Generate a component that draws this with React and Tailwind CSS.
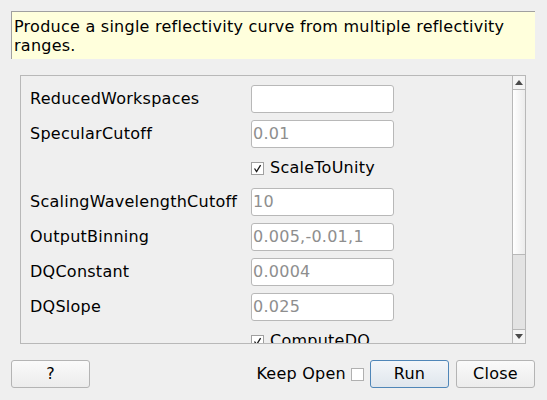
import React from 'react'

const FONT = { fontFamily: '"DejaVu Sans", "Liberation Sans", sans-serif' }

const ROWS = [
  { kind: 'input', label: 'ReducedWorkspaces', value: '' },
  { kind: 'input', label: 'SpecularCutoff', value: '0.01' },
  { kind: 'check', label: 'ScaleToUnity', checked: true },
  { kind: 'input', label: 'ScalingWavelengthCutoff', value: '10' },
  { kind: 'input', label: 'OutputBinning', value: '0.005,-0.01,1' },
  { kind: 'input', label: 'DQConstant', value: '0.0004' },
  { kind: 'input', label: 'DQSlope', value: '0.025' },
  { kind: 'check', label: 'ComputeDQ', checked: true },
]

function CheckBox({ checked }) {
  return (
    <div className="w-[13px] h-[13px] border border-[#a0a0a0] bg-white flex items-center justify-center shrink-0">
      {checked && (
        <svg width="9" height="9" viewBox="0 0 9 9">
          <path d="M1.5 4.5 L3.6 7.5 L7.6 1.2" fill="none" stroke="#1a1a1a" strokeWidth="1.3" />
        </svg>
      )}
    </div>
  )
}

function Row({ row }) {
  if (row.kind === 'check') {
    return (
      <div className="flex items-center h-[26px] mb-[7px]">
        <div className="w-[221px] shrink-0" />
        <CheckBox checked={row.checked} />
        <span className="ml-[6px] text-[16px] text-black whitespace-nowrap">{row.label}</span>
      </div>
    )
  }
  return (
    <div className="flex items-center h-[28px] mb-[7px]">
      <div className="w-[221px] shrink-0 text-[16px] text-black whitespace-nowrap">{row.label}</div>
      <div className="w-[143px] h-[28px] shrink-0 bg-white border border-[#b8b8b8] rounded-[3px] flex items-center pl-[1px] text-[16px] text-[#8e8e8e]">
        {row.value}
      </div>
    </div>
  )
}

function Scrollbar() {
  return (
    <div className="w-[14px] h-full border-x border-[#b8b8b8] flex flex-col shrink-0">
      {/* up arrow */}
      <div className="h-[14px] border-b border-[#b8b8b8] bg-[#f4f4f4] flex items-center justify-center">
        <svg width="8" height="5" viewBox="0 0 8 5">
          <path d="M0 5 L4 0 L8 5 Z" fill="#4a4a4a" />
        </svg>
      </div>
      {/* track */}
      <div className="h-[164px] bg-gradient-to-r from-[#ffffff] to-[#ececec]" />
      {/* handle */}
      <div className="flex-1 bg-[#e3e3e3] border-t border-[#b8b8b8]" />
      {/* down arrow */}
      <div className="h-[14px] border-t border-[#b8b8b8] bg-[#f4f4f4] flex items-center justify-center">
        <svg width="8" height="5" viewBox="0 0 8 5">
          <path d="M0 0 L8 0 L4 5 Z" fill="#4a4a4a" />
        </svg>
      </div>
    </div>
  )
}

function Button({ children, primary }) {
  return (
    <div
      className={`w-[79px] h-[28px] rounded-[3px] border flex items-center justify-center text-[16px] text-black ${
        primary
          ? 'border-[#4f86b8] bg-gradient-to-b from-[#f3f6f9] to-[#dfe6ed]'
          : 'border-[#b4b4b4] bg-gradient-to-b from-[#fafafa] to-[#ececec]'
      }`}
    >
      {children}
    </div>
  )
}

export default function App() {
  return (
    <div
      className="w-[547px] h-[400px] bg-[#efefef] pt-[11px] pl-[11px] flex flex-col overflow-hidden tracking-[0.25px]"
      style={FONT}
    >
      {/* Description */}
      <div className="w-[524px] h-[48px] bg-[#ffffdc] border-t border-l border-[#a0a0a0] pl-[2px] pt-[5px] text-[16px] leading-[19px] text-black">
        Produce a single reflectivity curve from multiple reflectivity ranges.
      </div>

      {/* Properties panel */}
      <div className="ml-[9px] mt-[16px] w-[506px] h-[269px] border-t border-l border-b border-[#b8b8b8] flex">
        <div className="flex-1 overflow-hidden pl-[9px] pt-[9px]">
          {ROWS.map((r) => (
            <Row key={r.label} row={r} />
          ))}
        </div>
        <Scrollbar />
      </div>

      {/* Bottom buttons */}
      <div className="mt-[16px] flex items-center w-[524px]">
        <Button>?</Button>
        <div className="ml-auto flex items-center">
          <span className="text-[16px] text-black">Keep Open</span>
          <div className="ml-[5px] w-[13px] h-[13px] border border-[#b0b0b0] bg-white" />
        </div>
        <div className="ml-[6px]">
          <Button primary>Run</Button>
        </div>
        <div className="ml-[7px]">
          <Button>Close</Button>
        </div>
      </div>
    </div>
  )
}
